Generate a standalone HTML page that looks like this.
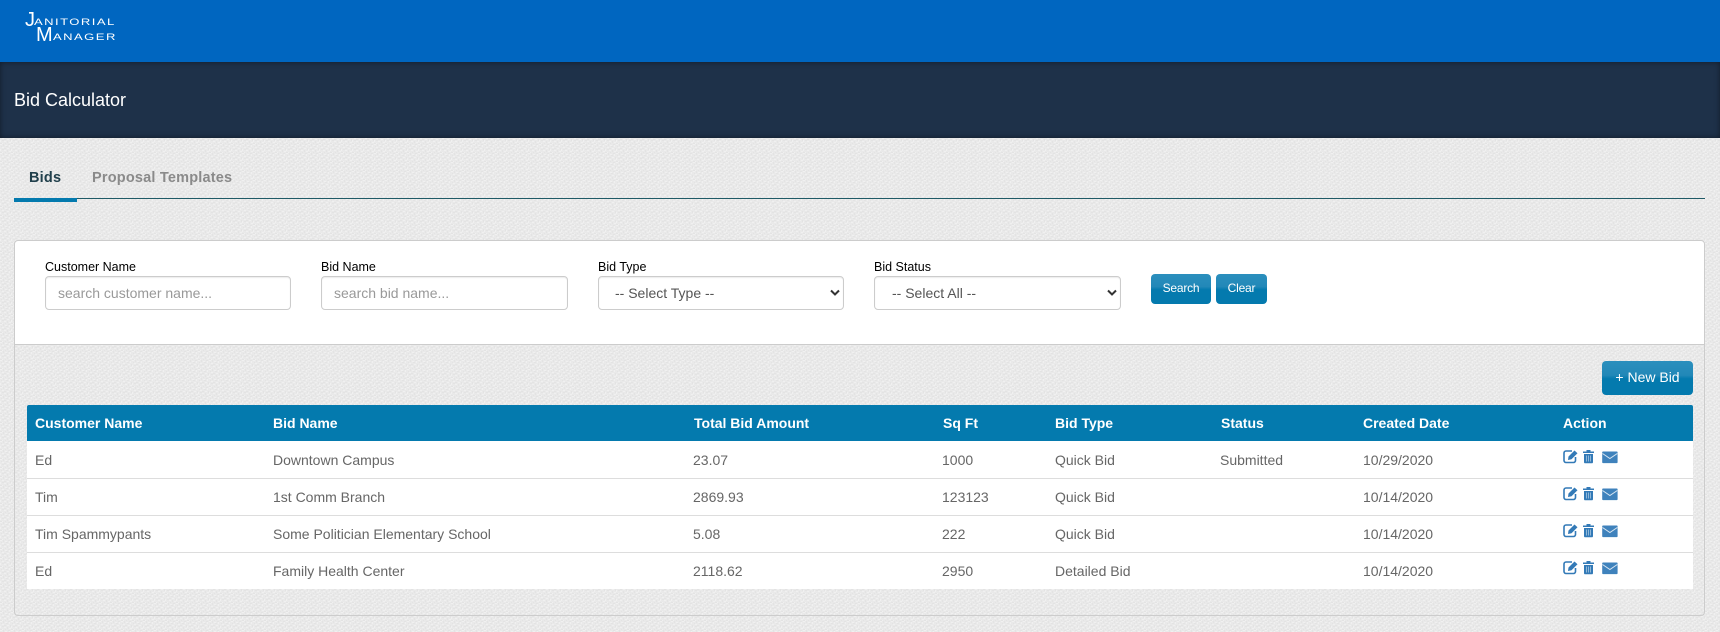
<!DOCTYPE html>
<html><head><meta charset="utf-8"><title>Bid Calculator</title>
<style>
*{box-sizing:border-box}
html,body{margin:0;padding:0}
body{width:1720px;height:632px;position:relative;overflow:hidden;font-family:"Liberation Sans",Arial,sans-serif;background-color:#e9e9e9}
.a{position:absolute;white-space:nowrap}
#top{left:0;top:0;width:1720px;height:62px;background:#0066c0}
#bar{left:0;top:62px;width:1720px;height:76px;background:#1e3149;box-shadow:inset 0 0 6px rgba(0,0,0,.45)}
#title{left:14px;top:63px;line-height:75px;font-size:18px;color:#fff}
.tab{font-size:14.5px;font-weight:bold;top:168px;line-height:20px;letter-spacing:.2px}
#panel{left:14px;top:240px;width:1691px;height:105px;background:#fff;border:1px solid #ccc;border-radius:4px 4px 0 0}
#lower{left:14px;top:344px;width:1691px;height:272px;border:1px solid #ccc;border-top:0;border-radius:0 0 4px 4px}
.lb{font-size:12.5px;color:#000;top:259px;line-height:16px}
.in{top:276px;height:34px;background:#fff;border:1px solid #ccc;border-radius:4px;font-size:14px;line-height:32px;padding-left:12px;color:#999;box-shadow:inset 0 1px 1px rgba(0,0,0,.075)}
.sel{color:#555;padding-left:16px}
.btn{background:linear-gradient(#2b8fbd 0,#2288b8 42%,#047aae 52%);border-radius:4px;color:#fff;text-align:center}
#thead{left:27px;top:405px;width:1666px;height:36px;background:#047aae;border-radius:2px 2px 0 0}
.th{top:405px;line-height:36px;font-size:14px;font-weight:bold;color:#fff}
.row{left:27px;width:1666px;background:#fff;border-bottom:1px solid #ddd}
.td{font-size:14px;line-height:20px;color:#666}
.lg{color:#fff;font-size:9px;line-height:10px;letter-spacing:1px;transform:scaleX(1.45);transform-origin:0 0}
svg{position:absolute;display:block}
</style></head><body>
<svg style="left:0;top:0" width="1720" height="632"><defs><pattern id="tx" width="11" height="9" patternUnits="userSpaceOnUse">
<path fill="#f0f0f0" d="M0 0h2v1H0zM5 1h2v1H5zM9 1h1v2H9zM2 3h2v1H2zM7 4h2v1H7zM0 5h1v2H0zM4 6h2v1H4zM9 7h2v1H9zM2 8h1v1H2z"/>
<path fill="#e3e3e3" d="M3 0h1v2H3zM8 0h2v1H8zM1 2h1v1H1zM6 2h2v1H6zM4 4h2v1H4zM10 4h1v2H10zM2 5h2v1H2zM7 6h1v2H7zM0 8h2v1H0zM5 8h1v1H5z"/>
</pattern></defs><rect width="1720" height="632" fill="url(#tx)"/></svg>
<div id="top" class="a"></div>
<div class="a" style="left:25px;top:10px;font-size:20px;line-height:20px;color:#fff">J</div>
<div class="a lg" style="left:34px;top:17px">ANITORIAL</div>
<div class="a" style="left:36px;top:25px;font-size:20px;line-height:20px;color:#fff">M</div>
<div class="a lg" style="left:53px;top:32px">ANAGER</div>
<div id="bar" class="a"></div>
<div id="title" class="a">Bid Calculator</div>

<div class="a tab" style="left:29px;color:#21404c">Bids</div>
<div class="a tab" style="left:92px;color:#8a8a8a">Proposal Templates</div>
<div class="a" style="left:14px;top:198px;width:1691px;height:1px;background:#1f5a66"></div>
<div class="a" style="left:14px;top:198px;width:63px;height:4px;background:#047aae"></div>

<div id="panel" class="a"></div>
<div id="lower" class="a"></div>

<div class="a lb" style="left:45px">Customer Name</div>
<div class="a lb" style="left:321px">Bid Name</div>
<div class="a lb" style="left:598px">Bid Type</div>
<div class="a lb" style="left:874px">Bid Status</div>
<div class="a in" style="left:45px;width:246px">search customer name...</div>
<div class="a in" style="left:321px;width:247px">search bid name...</div>
<div class="a in sel" style="left:598px;width:246px">-- Select Type --<svg style="left:231px;top:12px" width="10" height="8" viewBox="0 0 10 8"><path d="M1 1.500 5 5.500 9 1.500" fill="none" stroke="#333" stroke-width="2"/></svg></div>
<div class="a in sel" style="left:874px;width:247px;padding-left:17px">-- Select All --<svg style="left:232px;top:12px" width="10" height="8" viewBox="0 0 10 8"><path d="M1 1.500 5 5.500 9 1.500" fill="none" stroke="#333" stroke-width="2"/></svg></div>
<div class="a btn" style="left:1151px;top:274px;width:60px;height:30px;font-size:12px;line-height:28px;letter-spacing:-.2px">Search</div>
<div class="a btn" style="left:1216px;top:274px;width:51px;height:30px;font-size:12px;line-height:28px;letter-spacing:-.2px">Clear</div>
<div class="a btn" style="left:1602px;top:361px;width:91px;height:34px;font-size:14px;line-height:33px">+ New Bid</div>

<div id="thead" class="a"></div>
<div class="a th" style="left:35px">Customer Name</div>
<div class="a th" style="left:273px">Bid Name</div>
<div class="a th" style="left:694px">Total Bid Amount</div>
<div class="a th" style="left:943px">Sq Ft</div>
<div class="a th" style="left:1055px">Bid Type</div>
<div class="a th" style="left:1221px">Status</div>
<div class="a th" style="left:1363px">Created Date</div>
<div class="a th" style="left:1563px">Action</div>

<div class="a row" style="top:441px;height:38px"></div>
<div class="a row" style="top:479px;height:37px"></div>
<div class="a row" style="top:516px;height:37px"></div>
<div class="a row" style="top:553px;height:36px;border-bottom:0"></div>

<div class="a td" style="left:35px;top:450px">Ed</div><div class="a td" style="left:273px;top:450px">Downtown Campus</div><div class="a td" style="left:693px;top:450px">23.07</div><div class="a td" style="left:942px;top:450px">1000</div><div class="a td" style="left:1055px;top:450px">Quick Bid</div><div class="a td" style="left:1220px;top:450px">Submitted</div><div class="a td" style="left:1363px;top:450px">10/29/2020</div>
<div class="a td" style="left:35px;top:487px">Tim</div><div class="a td" style="left:273px;top:487px">1st Comm Branch</div><div class="a td" style="left:693px;top:487px">2869.93</div><div class="a td" style="left:942px;top:487px">123123</div><div class="a td" style="left:1055px;top:487px">Quick Bid</div><div class="a td" style="left:1363px;top:487px">10/14/2020</div>
<div class="a td" style="left:35px;top:524px">Tim Spammypants</div><div class="a td" style="left:273px;top:524px">Some Politician Elementary School</div><div class="a td" style="left:693px;top:524px">5.08</div><div class="a td" style="left:942px;top:524px">222</div><div class="a td" style="left:1055px;top:524px">Quick Bid</div><div class="a td" style="left:1363px;top:524px">10/14/2020</div>
<div class="a td" style="left:35px;top:561px">Ed</div><div class="a td" style="left:273px;top:561px">Family Health Center</div><div class="a td" style="left:693px;top:561px">2118.62</div><div class="a td" style="left:942px;top:561px">2950</div><div class="a td" style="left:1055px;top:561px">Detailed Bid</div><div class="a td" style="left:1363px;top:561px">10/14/2020</div>

<svg width="0" height="0"><defs>
<g id="ic" fill="#337ab7">
<path d="M9 2H3A2 2 0 0 0 1 4v7.500a2 2 0 0 0 2 2h7.500a2 2 0 0 0 2-2V8" fill="none" stroke="#337ab7" stroke-width="1.600"/>
<path d="M5.500 7.500 11.500 1.500 14.500 4.300 8.500 10.300 5 11z"/>
<path d="M20 2.500h3.500v-1.500h4v1.500H31v1.500H20zM21 5h9v8a1.300 1.300 0 0 1-1.300 1.300h-6.400A1.300 1.300 0 0 1 21 13z"/>
<path d="M23.500 6.500v6M25.500 6.500v6M27.500 6.500v6" stroke="#a8c8e2" stroke-width=".8"/>
<path d="M40 2.500h13.800a.8.800 0 0 1 .8.800v10a.8.800 0 0 1-.8.800H40a.8.800 0 0 1-.8-.8v-10a.8.800 0 0 1 .8-.8z" fill="#3f82bc"/>
<path d="M39.500 4.500 46.900 9.500 54.300 4.500" fill="none" stroke="#d8e6f2" stroke-width="1"/>
</g></defs></svg>
<svg style="left:1563px;top:449px" width="56" height="15" viewBox="0 0 56 15"><use href="#ic"/></svg>
<svg style="left:1563px;top:486px" width="56" height="15" viewBox="0 0 56 15"><use href="#ic"/></svg>
<svg style="left:1563px;top:523px" width="56" height="15" viewBox="0 0 56 15"><use href="#ic"/></svg>
<svg style="left:1563px;top:560px" width="56" height="15" viewBox="0 0 56 15"><use href="#ic"/></svg>
</body></html>
